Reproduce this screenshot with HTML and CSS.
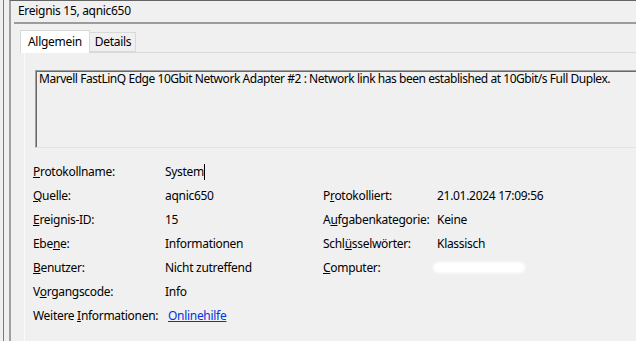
FILE: index.html
```html
<!DOCTYPE html>
<html lang="de">
<head>
    <meta charset="UTF-8">
    <title>Ereignis 15, aqnic650</title>
    <link rel="stylesheet" href="styles.css">
</head>
<body>
    <div class="outer">
        <div class="window">
            <div class="title">Ereignis 15, aqnic650</div>
            <div class="separator"></div>
            <div class="tabs">
                <div class="tab active">Allgemein</div>
                <div class="tab">Details</div>
            </div>
            <div class="panel">
                <div class="message">Marvell FastLinQ Edge 10Gbit Network Adapter #2 : Network link has been established at 10Gbit/s Full Duplex.</div>
                <div class="props">
                    <div class="label"><u>P</u>rotokollname:</div>
                    <div class="value wide">System<span class="caret"></span></div>

                    <div class="label"><u>Q</u>uelle:</div>
                    <div class="value">aqnic650</div>
                    <div class="label">P<u>r</u>otokolliert:</div>
                    <div class="value">21.01.2024 17:09:56</div>

                    <div class="label"><u>E</u>reignis-ID:</div>
                    <div class="value">15</div>
                    <div class="label">A<u>u</u>fgabenkategorie:</div>
                    <div class="value">Keine</div>

                    <div class="label">Ebe<u>n</u>e:</div>
                    <div class="value">Informationen</div>
                    <div class="label">Schl<u>ü</u>sselwörter:</div>
                    <div class="value">Klassisch</div>

                    <div class="label"><u>B</u>enutzer:</div>
                    <div class="value">Nicht zutreffend</div>
                    <div class="label"><u>C</u>omputer:</div>
                    <div class="value"><span class="hidden-name"></span></div>

                    <div class="label">V<u>o</u>rgangscode:</div>
                    <div class="value wide">Info</div>

                    <div class="label">Weitere <u>I</u>nformationen:</div>
                    <div class="value wide"><a class="link" href="#">Onlinehilfe</a></div>
                </div>
            </div>
        </div>
    </div>
</body>
</html>
```

FILE: styles.css
```css
body {
    margin: 0;
    background-color: #f0f0f0;
    font-family: 'Segoe UI', 'Noto Sans', sans-serif;
    font-size: 12px;
    letter-spacing: -0.3px;
    color: #000;
    height: 341px;
    overflow: hidden;
}
.outer {
    margin-left: 3px;
    border-left: 1px solid #7a7a7a;
    padding-left: 5px;
}
.window {
    border-left: 2px solid #a0a0a0;
    border-top: 1px solid #646464;
}
.title {
    height: 21px;
    line-height: 20px;
    padding-left: 7px;
}
.separator {
    height: 2px;
    margin-left: 3px;
    background-color: #9c9c9c;
}
.tabs {
    display: flex;
    align-items: flex-end;
    height: 28px;
    margin-left: 9px;
}
.tab {
    box-sizing: border-box;
    height: 20px;
    line-height: 18px;
    padding: 0 4px 0 5px;
    border: 1px solid #d9d9d9;
    border-left: none;
    background-color: #f0f0f0;
}
.tab.active {
    position: relative;
    height: 23px;
    line-height: 22px;
    margin-bottom: -1px;
    padding: 0 7px;
    border-left: 1px solid #d9d9d9;
    border-bottom: none;
    background-color: #fff;
}
.panel {
    margin-left: 13px;
    border-top: 1px solid #d9d9d9;
    border-left: 1px solid #fafafa;
    padding: 17px 0 30px 8px;
}
.message {
    margin-left: 2px;
    height: 76px;
    border-top: 1px solid #a0a0a0;
    border-left: 1px solid #a0a0a0;
    border-bottom: 1px solid #e3e3e3;
    box-shadow: inset 1px 1px 0 #696969;
    padding: 0 0 0 3px;
    line-height: 16px;
    letter-spacing: -0.45px;
    white-space: nowrap;
    overflow: hidden;
}
.props {
    display: grid;
    grid-template-columns: 132px 158px 114px auto;
    grid-auto-rows: 24px;
    margin-top: 12px;
    line-height: 24px;
}
.value.wide {
    grid-column: span 3;
}
.caret {
    display: inline-block;
    width: 1px;
    height: 16px;
    background-color: #000;
    vertical-align: -4px;
}
.hidden-name {
    display: inline-block;
    width: 92px;
    height: 11px;
    margin-left: -4px;
    border-radius: 6px;
    background-color: #fff;
    filter: blur(1.5px);
    vertical-align: -1px;
}
.link {
    margin-left: 3px;
    color: #0033dd;
}
```
